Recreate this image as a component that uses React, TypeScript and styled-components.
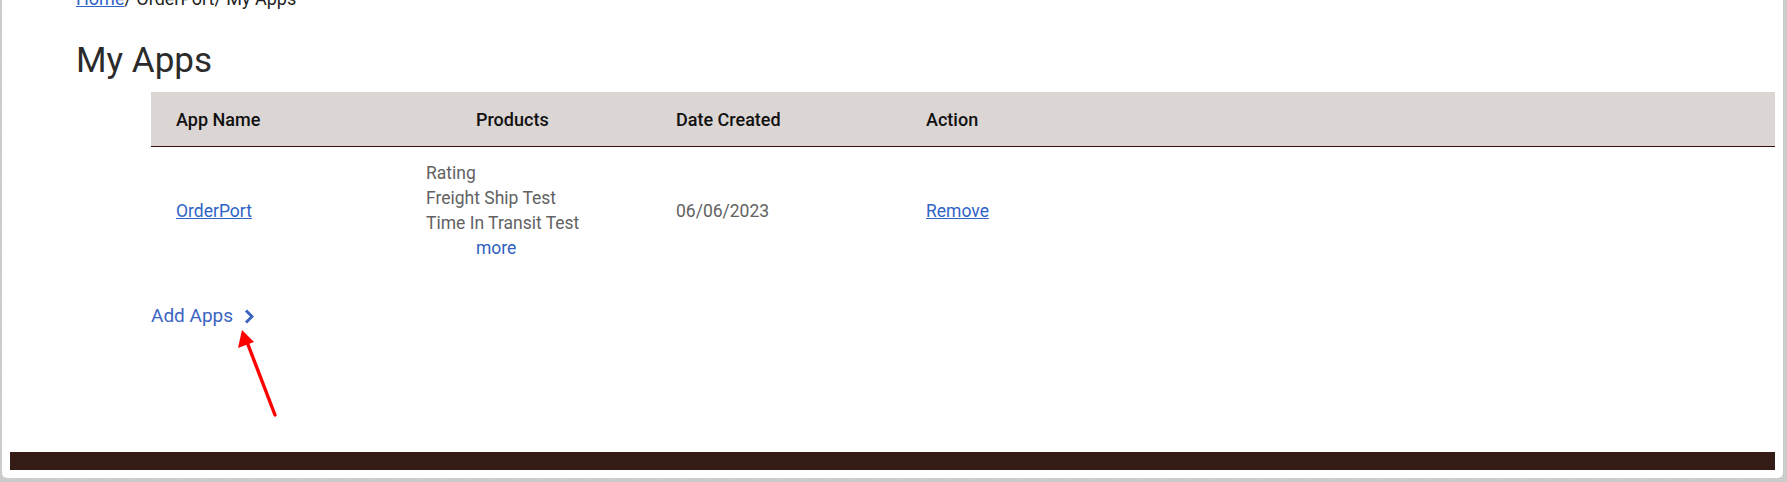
import styled, { createGlobalStyle } from 'styled-components';

const GlobalStyle = createGlobalStyle`
  html, body {
    margin: 0;
    padding: 0;
    background: #cdcdcd;
    font-family: Roboto, "Liberation Sans", Arial, sans-serif;
  }
  * { box-sizing: border-box; }
`;

const Frame = styled.div`
  width: 1787px;
  height: 482px;
  padding: 0 4px 4px 2px;
  background-color: #cdcdcd;
  background-image: radial-gradient(rgba(0, 0, 0, 0.06) 1px, transparent 1px);
  background-size: 3px 3px;
  overflow: hidden;
`;

const Panel = styled.div`
  position: relative;
  height: 478px;
  background: #fff;
  border-radius: 0 0 5px 5px;
  display: flex;
  flex-direction: column;
  overflow: hidden;
`;

const Content = styled.main`
  padding: 0 8px 0 74px;
`;

const Breadcrumb = styled.nav`
  margin-top: -11px;
  font-size: 18px;
  line-height: 20px;
  color: #222;
`;

const CrumbLink = styled.a`
  color: #2f63c6;
  text-decoration: underline;
`;

const Title = styled.h1`
  margin: 31px 0 0;
  font-size: 35px;
  font-weight: 400;
  line-height: 42px;
  color: #2b2b2b;
`;

const Section = styled.section`
  margin: 10px 0 0 75px;
`;

const Grid = styled.div`
  display: grid;
  grid-template-columns: 250px 250px 250px 1fr;
`;

const HeadRow = styled(Grid)`
  height: 55px;
  background: #dbd6d4;
  border-bottom: 1px solid #3a0b0b;
  align-items: center;
`;

const HeadCell = styled.div<{ $indent?: number }>`
  padding-left: ${(p) => p.$indent ?? 25}px;
  font-size: 18px;
  font-weight: 500;
  color: #111;
`;

const BodyRow = styled(Grid)`
  padding: 14px 0;
  align-items: center;
  font-size: 17.5px;
  line-height: 25px;
  color: #626262;
`;

const Cell = styled.div`
  padding-left: 25px;
`;

const LinkText = styled.a`
  color: #2f63c6;
  text-decoration: underline;
`;

const ProductList = styled.ul`
  list-style: none;
  margin: 0;
  padding: 0;
`;

const MoreLink = styled.a`
  display: block;
  padding-left: 50px;
  color: #2f5fc0;
  text-decoration: none;
`;

const AddApps = styled.a`
  display: inline-flex;
  align-items: center;
  gap: 11px;
  margin-top: 30px;
  font-size: 19px;
  line-height: 22px;
  color: #3c64c2;
  text-decoration: none;
`;

const Footer = styled.footer`
  margin: auto 8px 8px 8px;
  height: 18px;
  background: #351c16;
`;

const Annotation = styled.svg`
  position: absolute;
  left: 225px;
  top: 320px;
  pointer-events: none;
`;

const products = ['Rating', 'Freight Ship Test', 'Time In Transit Test'];

export default function App() {
  return (
    <>
      <GlobalStyle />
      <Frame>
        <Panel>
          <Content>
            <Breadcrumb>
              <CrumbLink href="#">Home</CrumbLink>/ OrderPort/ My Apps
            </Breadcrumb>
            <Title>My Apps</Title>
            <Section>
              <HeadRow>
                <HeadCell>App Name</HeadCell>
                <HeadCell $indent={75}>Products</HeadCell>
                <HeadCell>Date Created</HeadCell>
                <HeadCell>Action</HeadCell>
              </HeadRow>
              <BodyRow>
                <Cell>
                  <LinkText href="#">OrderPort</LinkText>
                </Cell>
                <Cell>
                  <ProductList>
                    {products.map((p) => (
                      <li key={p}>{p}</li>
                    ))}
                  </ProductList>
                  <MoreLink href="#">more</MoreLink>
                </Cell>
                <Cell>06/06/2023</Cell>
                <Cell>
                  <LinkText href="#">Remove</LinkText>
                </Cell>
              </BodyRow>
              <AddApps href="#">
                Add Apps
                <svg width="10" height="15" viewBox="0 0 10 15">
                  <path d="M2 1.5 L8 7.5 L2 13.5" fill="none" stroke="#3c64c2" strokeWidth="3" />
                </svg>
              </AddApps>
            </Section>
          </Content>
          <Footer />
          {/* red annotation arrow */}
          <Annotation width="60" height="100" viewBox="0 0 60 100">
            <line x1="48" y1="95" x2="20" y2="22" stroke="#ff0000" strokeWidth="3.4" strokeLinecap="round" />
            <polygon points="15,10 11,28 27,22" fill="#ff0000" />
          </Annotation>
        </Panel>
      </Frame>
    </>
  );
}
